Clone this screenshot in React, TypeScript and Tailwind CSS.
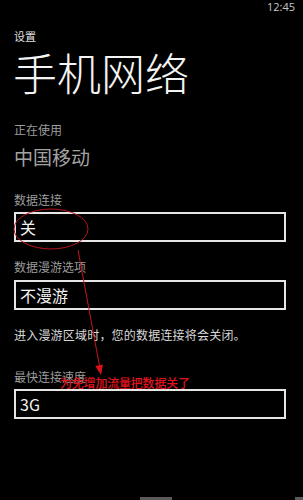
const font = "font-['Noto_Sans_CJK_SC','Noto_Sans',sans-serif]";

const Label = ({ text, mt }: { text: string; mt: string }) => (
  <div className={`${mt} text-[12px] leading-none text-[#9c9c9c]`}>{text}</div>
);

const Picker = ({ value, mt }: { value: string; mt: string }) => (
  <div
    className={`${mt} w-[272px] h-[30px] border-2 border-[#e6e6e6] flex items-center pl-[4px] text-[16px] leading-none text-[#f2f2f2]`}
  >
    {value}
  </div>
);

export default function App() {
  return (
    <div className={`relative w-[303px] h-[500px] bg-black overflow-hidden flex flex-col ${font}`}>
      {/* status bar */}
      <div className="flex justify-end pr-[8px] pt-[1px] h-[12px] text-[11px] leading-none text-[#c8c8c8] font-['Open_Sans',sans-serif]">
        12:45
      </div>

      <div className="px-[14px] flex flex-col">
        <div className="mt-[19px] text-[11px] leading-none text-[#e0e0e0]">设置</div>
        <div className="mt-[8px] text-[44px] leading-none font-light text-[#f4f4f4] -ml-[1px]">手机网络</div>

        <Label text="正在使用" mt="mt-[30px]" />
        <div className="mt-[11px] text-[19px] leading-none text-[#a3a3a3]">中国移动</div>

        <Label text="数据连接" mt="mt-[28px]" />
        <Picker value="关" mt="mt-[6px]" />

        <Label text="数据漫游选项" mt="mt-[19px]" />
        <Picker value="不漫游" mt="mt-[7px]" />

        <div className="mt-[19px] text-[12px] leading-none text-[#d8d8d8] tracking-[0.2px]">
          进入漫游区域时，您的数据连接将会关闭。
        </div>

        <Label text="最快连接速度" mt="mt-[30px]" />
        <Picker value="3G" mt="mt-[6px]" />
      </div>

      {/* bottom app bar hint */}
      <div className="mt-auto flex h-[3px]">
        <div className="ml-[140px] w-[32px] bg-[#5a5a5a]" />
        <div className="ml-auto w-[8px] bg-[#5a5a5a]" />
      </div>

      {/* red annotation */}
      <svg
        className="absolute left-0 top-0 pointer-events-none"
        width="303"
        height="500"
        viewBox="0 0 303 500"
      >
        <ellipse cx="51" cy="229" rx="37" ry="20" fill="none" stroke="#b8141c" strokeWidth="1" />
        <line x1="78" y1="250" x2="99.5" y2="366" stroke="#c8141c" strokeWidth="1" />
        <polygon points="103,364.4 95.3,365.9 101,375" fill="#e01018" />
      </svg>
      <div className="absolute left-[60px] top-[377px] text-[12px] leading-none font-medium text-[#e0141c] tracking-[-0.2px]">
        为免增加流量把数据关了
      </div>
    </div>
  );
}
